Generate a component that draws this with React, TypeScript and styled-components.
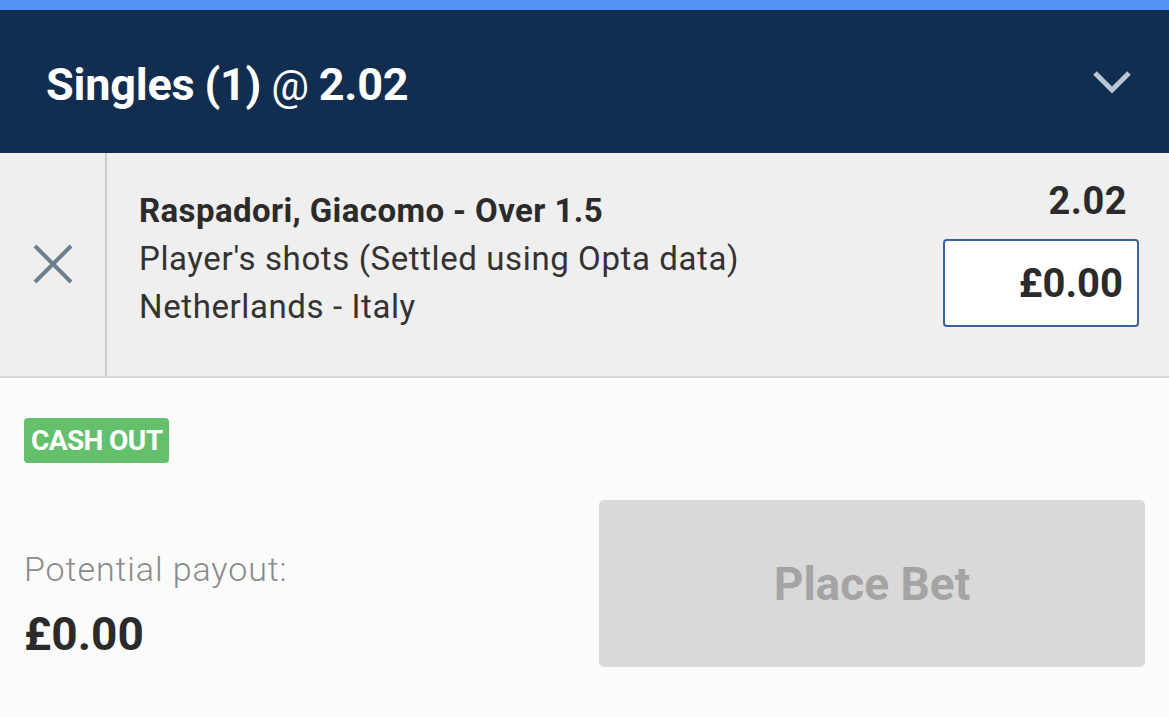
import React from 'react';
import styled, { createGlobalStyle } from 'styled-components';

const GlobalStyle = createGlobalStyle`
  html, body {
    margin: 0;
    padding: 0;
    background: #fcfbfc;
  }
  body {
    font-family: Roboto, 'Noto Sans', sans-serif;
  }
`;

const Page = styled.div`
  width: 1169px;
  height: 717px;
  display: flex;
  flex-direction: column;
  overflow: hidden;
  background: #fcfbfc;
`;

const TopStrip = styled.div`
  height: 10px;
  background: #5294f2;
`;

const Header = styled.div`
  height: 143px;
  background: #112e51;
  display: flex;
  align-items: center;
  justify-content: space-between;
  padding: 0 38px 0 46px;
`;

const Title = styled.h1`
  margin: 0;
  font-size: 45px;
  font-weight: 700;
  color: #ffffff;
  letter-spacing: -0.2px;
  padding-top: 6px;
  word-spacing: -1px;
`;

const At = styled.span`
  font-weight: 400;
  font-size: 42px;
`;

const BetRow = styled.div`
  height: 223px;
  display: flex;
  background: #efefef;
  border-bottom: 2px solid #d6d6d6;
`;

const RemoveCell = styled.div`
  width: 105px;
  flex-shrink: 0;
  border-right: 2px solid #cdcdcd;
  display: flex;
  align-items: center;
  justify-content: center;
  padding-bottom: 2px;
`;

const Details = styled.div`
  flex: 1;
  display: flex;
  flex-direction: column;
  padding: 34px 0 0 32px;
`;

const Selection = styled.div`
  font-size: 33px;
  font-weight: 700;
  color: #2b2b2b;
  line-height: 48px;
  letter-spacing: 0.4px;
`;

const Market = styled.div`
  font-size: 33px;
  font-weight: 400;
  color: #333333;
  line-height: 48px;
  letter-spacing: 0.6px;
`;

const OddsCell = styled.div`
  display: flex;
  flex-direction: column;
  align-items: flex-end;
  padding: 26px 30px 0 0;
`;

const Odds = styled.div`
  font-size: 38px;
  font-weight: 700;
  color: #2b2b2b;
  margin-right: 12px;
  line-height: 44px;
  letter-spacing: 0.5px;
`;

const StakeBox = styled.div`
  margin-top: 16px;
  width: 196px;
  height: 88px;
  box-sizing: border-box;
  border: 2px solid #3a619c;
  border-radius: 4px;
  background: #ffffff;
  display: flex;
  align-items: center;
  justify-content: flex-end;
  padding-right: 14px;
  font-size: 40px;
  font-weight: 700;
  color: #2b2b2b;
`;

const Footer = styled.div`
  flex: 1;
  display: grid;
  grid-template-columns: 1fr 546px;
  grid-template-rows: auto 1fr;
  padding: 40px 24px 0 24px;
`;

const Badge = styled.div`
  grid-column: 1 / 3;
  justify-self: start;
  background: #65c06e;
  color: #ffffff;
  font-size: 28px;
  font-weight: 700;
  border-radius: 4px;
  padding: 0 7px;
  height: 45px;
  display: flex;
  align-items: center;
  letter-spacing: -0.6px;
`;

const Payout = styled.div`
  display: flex;
  flex-direction: column;
  padding-top: 86px;
`;

const PayoutLabel = styled.div`
  font-size: 34px;
  font-weight: 300;
  color: #8a8a8a;
  line-height: 40px;
  letter-spacing: 0.9px;
`;

const PayoutValue = styled.div`
  font-size: 46px;
  font-weight: 700;
  color: #2b2b2b;
  margin-top: 18px;
`;

const PlaceBet = styled.button`
  margin-top: 37px;
  height: 167px;
  width: 546px;
  border: none;
  border-radius: 5px;
  background: #d9d9d9;
  color: #a4a4a4;
  font-family: Roboto, sans-serif;
  font-size: 46px;
  font-weight: 700;
  cursor: default;
`;

const CloseIcon = () => (
  <svg width="40" height="40" viewBox="0 0 40 40">
    <path d="M2 2 L38 38 M38 2 L2 38" stroke="#6d7f8f" strokeWidth="4" />
  </svg>
);

const Chevron = () => (
  <svg width="38" height="24" viewBox="0 0 38 24">
    <path d="M2 3 L19 20 L36 3" stroke="#bac6d6" strokeWidth="5" fill="none" />
  </svg>
);

export default function App() {
  return (
    <Page>
      <GlobalStyle />
      <TopStrip />
      <Header>
        <Title>
          Singles (1) <At>@</At> 2.02
        </Title>
        <Chevron />
      </Header>
      <BetRow>
        <RemoveCell>
          <CloseIcon />
        </RemoveCell>
        <Details>
          <Selection>Raspadori, Giacomo - Over 1.5</Selection>
          <Market>Player's shots (Settled using Opta data)</Market>
          <Market>Netherlands - Italy</Market>
        </Details>
        <OddsCell>
          <Odds>2.02</Odds>
          <StakeBox>£0.00</StakeBox>
        </OddsCell>
      </BetRow>
      <Footer>
        <Badge>CASH OUT</Badge>
        <Payout>
          <PayoutLabel>Potential payout:</PayoutLabel>
          <PayoutValue>£0.00</PayoutValue>
        </Payout>
        <PlaceBet>Place Bet</PlaceBet>
      </Footer>
    </Page>
  );
}
